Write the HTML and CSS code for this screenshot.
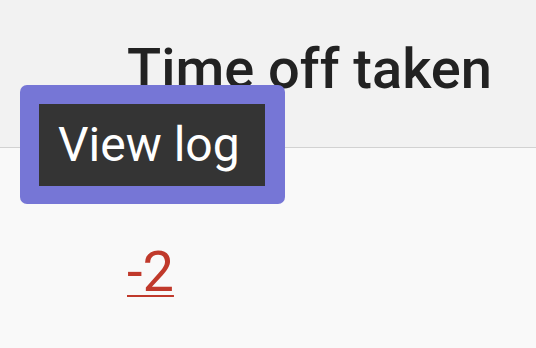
FILE: index.html
```html
<!DOCTYPE html>
<html lang="en">
<head>
<meta charset="utf-8">
<link rel="stylesheet" href="styles.css">
</head>
<body>
<div class="page">
  <div class="header">
    <div class="title">Time off taken</div>
  </div>
  <div class="cell">
    <a class="value" href="#">-2</a>
  </div>
  <div class="tooltip-ring">
    <div class="tooltip">View log</div>
  </div>
</div>
</body>
</html>
```
FILE: styles.css
```css
html, body {
  margin: 0;
  padding: 0;
}
body {
  background: #f9f9f9;
  font-family: Roboto, "Liberation Sans", sans-serif;
  width: 536px;
  height: 348px;
  overflow: hidden;
}
.page {
  position: relative;
  width: 536px;
  height: 348px;
}
.header {
  background: #f2f2f2;
  height: 148px;
  border-bottom: 1px solid #d2d2d2;
  box-sizing: border-box;
  padding: 36px 0 0 127px;
}
.title {
  font-size: 56px;
  line-height: 66px;
  font-weight: 500;
  color: #222222;
  white-space: nowrap;
}
.cell {
  padding: 91px 0 0 127px;
}
.value {
  font-size: 56px;
  line-height: 66px;
  color: #c0392b;
  text-decoration: underline;
  text-decoration-thickness: 2px;
  text-underline-offset: 4px;
}
.tooltip-ring {
  position: absolute;
  left: 20px;
  top: 85px;
  width: 265px;
  height: 119px;
  box-sizing: border-box;
  padding: 19px;
  background: #7676d6;
  border-radius: 7px;
}
.tooltip {
  background: #343434;
  color: #ffffff;
  height: 82px;
  width: 226px;
  box-sizing: border-box;
  padding: 13px 0 0 19px;
  font-size: 48px;
  line-height: 56px;
  white-space: nowrap;
}
```
